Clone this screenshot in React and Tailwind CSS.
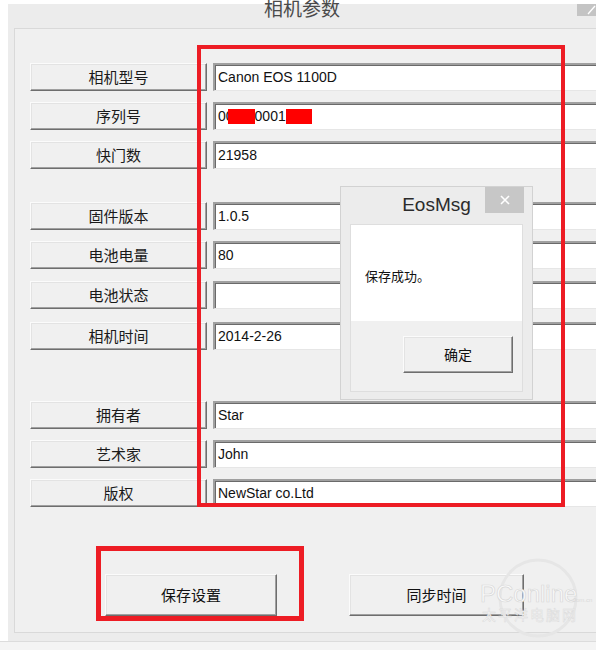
const rows = [
  { label: '相机型号', value: 'Canon EOS 1100D', mt: 'mt-[34px]' },
  { label: '序列号', value: 'serial', mt: 'mt-[11px]' },
  { label: '快门数', value: '21958', mt: 'mt-[11px]' },
  { label: '固件版本', value: '1.0.5', mt: 'mt-[33px]' },
  { label: '电池电量', value: '80', mt: 'mt-[11px]' },
  { label: '电池状态', value: '', mt: 'mt-[12px]' },
  { label: '相机时间', value: '2014-2-26', mt: 'mt-[13px]' },
  { label: '拥有者', value: 'Star', mt: 'mt-[51px]' },
  { label: '艺术家', value: 'John', mt: 'mt-[11px]' },
  { label: '版权', value: 'NewStar co.Ltd', mt: 'mt-[11px]' },
];

const raised =
  'border border-t-[#fbfbfb] border-l-[#fbfbfb] border-r-[#6e6e6e] border-b-[#6e6e6e] bg-[#f0f0f0] shadow-[inset_-1px_-1px_0_#a0a0a0,inset_1px_1px_0_#e3e3e3]';

function SerialValue() {
  return (
    <div className="flex items-center">
      <span>00</span>
      <span className="-ml-[6px] inline-block h-[15px] w-[27px] bg-[#ff0000]" />
      <span>0001</span>
      <span className="inline-block h-[15px] w-[26px] bg-[#ff0000]" />
    </div>
  );
}

function Row({ label, value, mt }) {
  return (
    <div className={`flex h-[28px] ${mt}`}>
      <div
        className={`flex w-[177px] items-center justify-center text-[15px] text-[#1a1a1a] ${raised}`}
        style={{ fontFamily: '"Noto Sans CJK SC", sans-serif' }}
      >
        {label}
      </div>
      <div className="ml-[6px] flex w-[400px] items-center border-l-2 border-t-2 border-b border-l-[#a0a0a0] border-t-[#a0a0a0] border-b-[#e6e6e6] bg-white pl-[3px] text-[14px] text-[#111] shadow-[inset_1px_1px_0_#6a6a6a]">
        {value === 'serial' ? <SerialValue /> : value}
      </div>
    </div>
  );
}

function Dialog() {
  return (
    <div className="absolute left-[340px] top-[186px] h-[214px] w-[193px] border border-[#d2d2d2] bg-[#ececec]">
      <div className="relative flex h-[37px] items-center justify-center">
        <span
          className="text-[19px] text-[#2b2b2b]"
          style={{ fontFamily: '"Liberation Sans", Arial, sans-serif' }}
        >
          EosMsg
        </span>
        <div className="absolute right-[8px] top-0 flex h-[26px] w-[39px] items-center justify-center bg-[#c7c7c7]">
          <svg width="10" height="10" viewBox="0 0 10 10">
            <path d="M1 1L9 9M9 1L1 9" stroke="#fff" strokeWidth="1.6" />
          </svg>
        </div>
      </div>
      <div className="mx-[9px] flex h-[168px] flex-col border border-[#dedede]">
        <div
          className="flex h-[96px] items-center bg-white pl-[14px] pt-[6px] text-[13px] text-[#111]"
          style={{ fontFamily: '"Noto Sans CJK SC", sans-serif' }}
        >
          保存成功。
        </div>
        <div className="flex flex-1 justify-end bg-[#f0f0f0] pr-[9px] pt-[15px]">
          <div
            className={`flex h-[37px] w-[110px] items-center justify-center text-[14px] text-[#111] ${raised}`}
            style={{ fontFamily: '"Noto Sans CJK SC", sans-serif' }}
          >
            确定
          </div>
        </div>
      </div>
    </div>
  );
}

function Watermark() {
  return (
    <svg className="absolute left-[470px] top-[558px]" width="126" height="80" viewBox="0 0 126 80">
      <circle cx="68" cy="40" r="38" fill="none" stroke="#e6e6e6" strokeWidth="3" />
      <text x="10" y="44" fontSize="24" fontFamily="Liberation Sans, Arial, sans-serif" fill="#fafafa" stroke="#d8d8d8" strokeWidth="0.7">
        PConline
      </text>
      <text x="103" y="44" fontSize="6" fontFamily="Liberation Sans, Arial, sans-serif" fill="#dadada">
        com.cn
      </text>
      <text x="12" y="62" fontSize="14" fontFamily="Noto Sans CJK SC, sans-serif" fill="#f8f8f8" stroke="#dadada" strokeWidth="0.5" letterSpacing="2">
        太平洋电脑网
      </text>
    </svg>
  );
}

export default function App() {
  return (
    <div
      className="relative h-[650px] w-[596px] overflow-hidden bg-white"
      style={{ fontFamily: '"Liberation Sans", Arial, sans-serif' }}
    >
      <div className="ml-[8px] mt-[4px] h-[637px] bg-[#ececec]">
        <div
          className="relative flex h-[24px] items-center justify-center pb-[16px] text-[19px] text-[#4a4a4a]"
          style={{ fontFamily: '"Noto Sans CJK SC", sans-serif' }}
        >
          相机参数
          <div className="absolute right-0 top-0 h-[12px] w-[19px] bg-[#c4c4c4]">
            <svg width="19" height="12" viewBox="0 0 19 12">
              <path d="M11 10L18 2" stroke="#fff" strokeWidth="1.4" />
            </svg>
          </div>
        </div>
        <div className="ml-[6px] h-[605px] w-[600px] border border-[#d9d9d9] bg-[#f0f0f0] pl-[15px]">
          {rows.map((r) => (
            <Row key={r.label} {...r} />
          ))}
          <div className="mt-[67px] flex">
            <div
              className={`ml-[75px] flex h-[42px] w-[172px] items-center justify-center text-[15px] text-[#111] ${raised}`}
              style={{ fontFamily: '"Noto Sans CJK SC", sans-serif' }}
            >
              保存设置
            </div>
            <div
              className={`ml-[72px] flex h-[42px] w-[175px] items-center justify-center text-[15px] text-[#111] ${raised}`}
              style={{ fontFamily: '"Noto Sans CJK SC", sans-serif' }}
            >
              同步时间
            </div>
          </div>
        </div>
      </div>
      <div className="h-[9px] border-t border-[#dcdcdc] bg-[#f4f4f4]" />

      <Dialog />
      <Watermark />

      <div className="absolute left-[197px] top-[45px] h-[462px] w-[368px] border-4 border-[#ed1c24]" />
      <div className="absolute left-[96px] top-[546px] h-[75px] w-[208px] border-[5px] border-[#ed1c24]" />
    </div>
  );
}
